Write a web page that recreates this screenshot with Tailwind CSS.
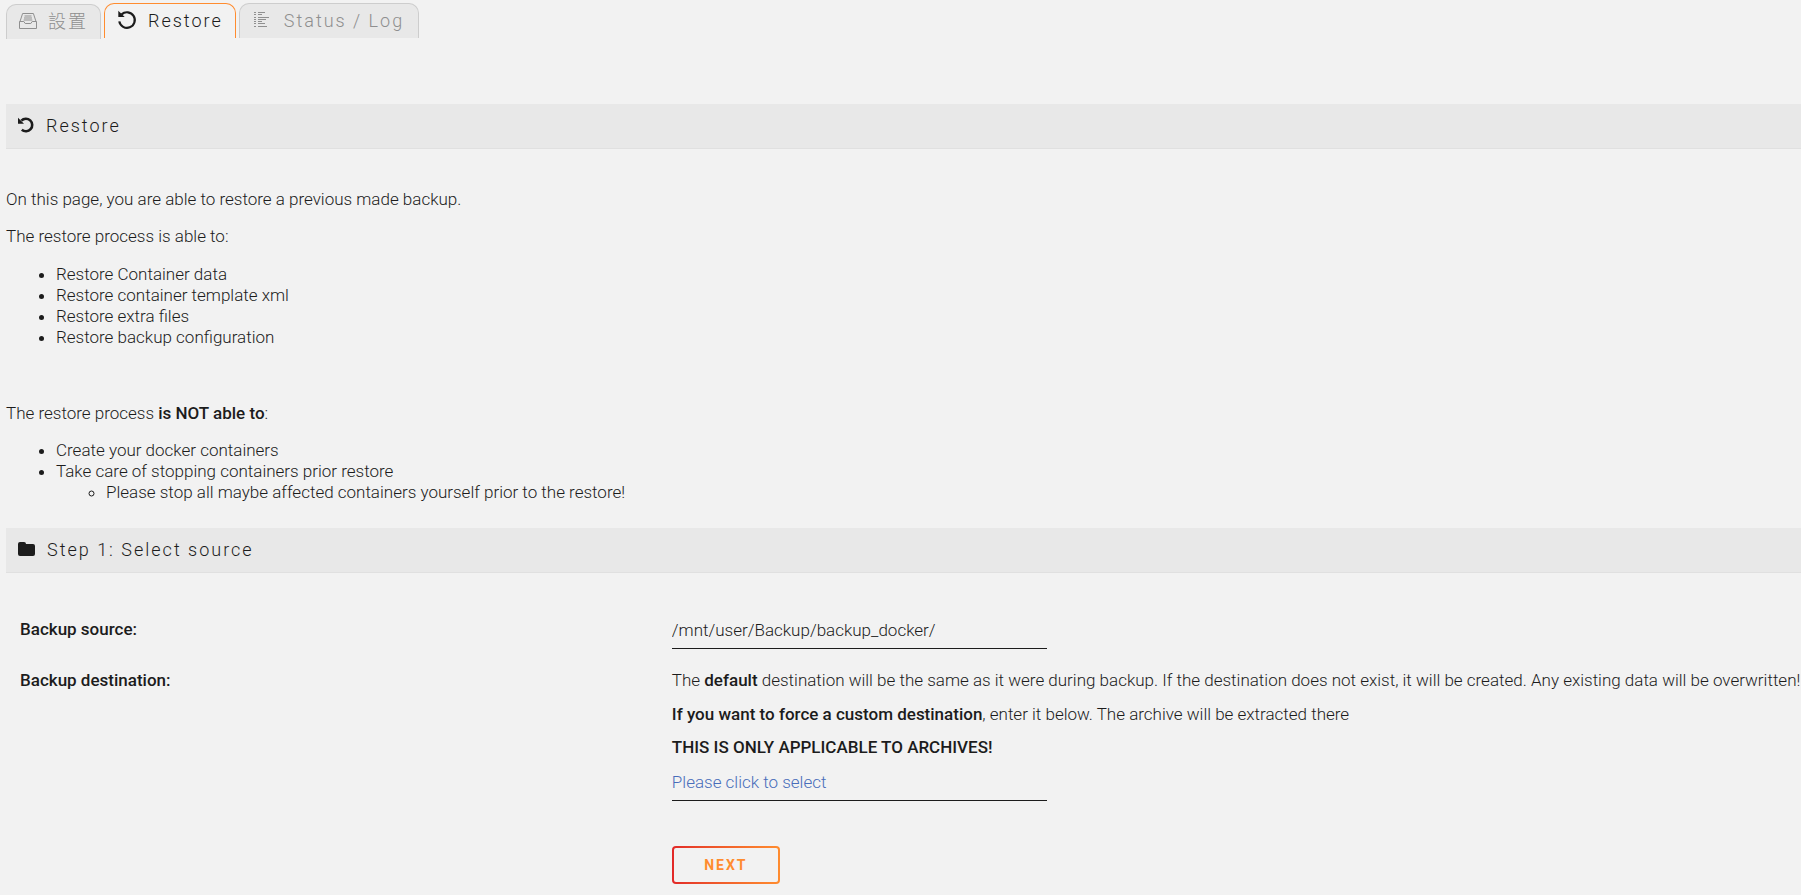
<!DOCTYPE html>
<html lang="en">

<head>
    <meta charset="utf-8">
    <title>Restore</title>
    <script src="https://cdn.jsdelivr.net/npm/@tailwindcss/browser@4"></script>
</head>

<body class="bg-[#f2f2f2] text-[#1c1c1c] font-[Roboto,'Noto_Sans_CJK_TC',sans-serif] font-light text-[17px] leading-[21px] overflow-x-hidden">
    <div class="pl-1.5 pb-2.5">
        <!-- Tabs -->
        <div role="tablist" class="flex items-start gap-[3px] pt-[3px] text-[18px] tracking-[2px] text-[#8f8f8f]">
            <button role="tab" aria-selected="false" class="mt-px flex h-[35px] items-center gap-[11px] rounded-t-[10px] border border-b-0 border-[#cdcdcd] bg-[#e8e8e8] px-3 pb-0.5">
                <svg class="h-[18px] w-[18px]" viewBox="0 0 18 18" fill="none" stroke="currentColor" aria-hidden="true">
                    <path d="M1 9.5 3.6 1.5h10.8L17 9.5" />
                    <path d="M.5 9.5h4.3l1.4 2h5.6l1.4-2h4.3v7H.5z" />
                    <path d="M5.5 4h7M5 6h8M4.7 8h8.6" />
                </svg>
                <span>設置</span>
            </button>
            <button role="tab" aria-selected="true" class="flex h-[35px] items-center gap-[11px] rounded-t-[10px] border border-b-0 border-[#ff8c2f] bg-[#f2f2f2] px-3 pb-0.5 text-[#1c1c1c]">
                <svg class="h-[20px] w-[20px]" viewBox="0 0 20 20" aria-hidden="true">
                    <path d="M4.6 4.4a7.8 7.8 0 1 1-2.3 7" fill="none" stroke="currentColor" stroke-width="2.2" />
                    <path d="M1.3.7v6.3h6.4z" fill="currentColor" />
                </svg>
                <span>Restore</span>
            </button>
            <button role="tab" aria-selected="false" class="flex h-[35px] items-center gap-3.5 rounded-t-[10px] border border-b-0 border-[#cdcdcd] bg-[#e8e8e8] px-3.5 pb-0.5">
                <svg class="h-[16px] w-[16px]" viewBox="0 0 16 16" stroke="currentColor" aria-hidden="true">
                    <path d="M0 .5h2M0 2.5h2M0 5.5h2M0 7.5h2M0 9.5h2M0 11.5h2M0 14.5h2M4 .5h7M4 2.5h4M4 5.5h11M4 7.5h8M4 9.5h4M4 11.5h7M4 14.5h9" />
                </svg>
                <span>Status / Log</span>
            </button>
        </div>

        <!-- Restore -->
        <h2 class="mt-[65px] flex h-[45px] items-center gap-3 border-b border-[#e0e0e0] bg-[#e8e8e8] pb-0.5 pl-3 text-[18px] tracking-[2px]">
            <svg class="h-4 w-4" viewBox="0 0 16 16" aria-hidden="true">
                <path d="M3.4 3.6a6.3 6.3 0 1 1 .4 9.2" fill="none" stroke="currentColor" stroke-width="2.6" />
                <path d="M0 .8v6h6z" fill="currentColor" />
            </svg>
            Restore
        </h2>

        <p class="mt-10">On this page, you are able to restore a previous made backup.</p>
        <p class="mt-4">The restore process is able to:</p>
        <ul class="mt-[17px] list-disc pl-[50px]">
            <li>Restore Container data</li>
            <li>Restore container template xml</li>
            <li>Restore extra files</li>
            <li>Restore backup configuration</li>
        </ul>

        <p class="mt-[55px]">The restore process <b class="font-medium">is NOT able to</b>:</p>
        <ul class="mt-4 list-disc pl-[50px]">
            <li>Create your docker containers</li>
            <li>Take care of stopping containers prior restore
                <ul class="list-[circle] pl-[50px]">
                    <li>Please stop all maybe affected containers yourself prior to the restore!</li>
                </ul>
            </li>
        </ul>

        <!-- Step 1 -->
        <h2 class="mt-[25px] flex h-[45px] items-center gap-3 border-b border-[#e0e0e0] bg-[#e8e8e8] pb-0.5 pl-3 text-[18px] tracking-[2px]">
            <svg class="h-4 w-[17px]" viewBox="0 0 17 16" fill="currentColor" aria-hidden="true">
                <path d="M2 1h4a2 2 0 0 1 2 2h7a2 2 0 0 1 2 2v8a2 2 0 0 1-2 2H2a2 2 0 0 1-2-2V3a2 2 0 0 1 2-2z" />
            </svg>
            Step 1: Select source
        </h2>

        <form class="mt-[46px] pl-3.5">
            <div class="grid grid-cols-[36.6%_1fr]">
                <label for="source" class="font-medium">Backup source:</label>
                <div>
                    <input id="source" type="text" value="/mnt/user/Backup/backup_docker/" class="block h-[30px] w-[375px] border-b border-[#1c1c1c] pb-[7px] outline-none">
                </div>
            </div>
            <div class="mt-[21px] grid grid-cols-[36.6%_1fr]">
                <label for="destination" class="font-medium">Backup destination:</label>
                <div>
                    <p class="whitespace-nowrap">The <b class="font-medium">default</b> destination will be the same as it were during backup. If the destination does not exist, it will be created. Any existing data will be overwritten!</p>
                    <p class="mt-[13px]"><b class="font-medium">If you want to force a custom destination</b>, enter it below. The archive will be extracted there</p>
                    <p class="mt-3"><b class="font-medium">THIS IS ONLY APPLICABLE TO ARCHIVES!</b></p>
                    <input id="destination" type="text" placeholder="Please click to select" class="mt-[13px] block h-[30px] w-[375px] border-b border-[#1c1c1c] pb-[7px] outline-none placeholder:text-[#486dba]">
                    <button type="button" class="mt-[45px] h-[38px] w-[108px] rounded bg-linear-to-r from-[#e22828] to-[#ff8c2f] p-0.5">
                        <span class="flex h-full items-center justify-center rounded-xs bg-[#f2f2f2] text-[14px] font-bold tracking-[2px] text-[#ff8c2f]">NEXT</span>
                    </button>
                </div>
            </div>
        </form>
    </div>
</body>

</html>
